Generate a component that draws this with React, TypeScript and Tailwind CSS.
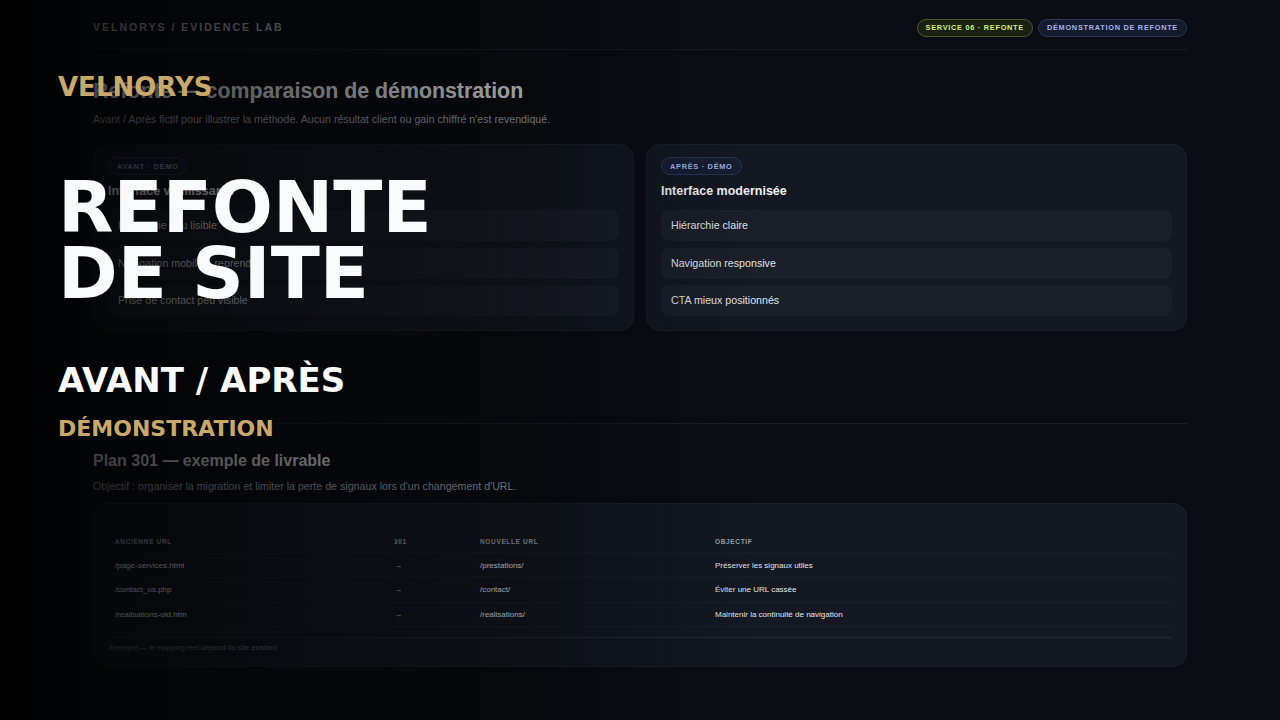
const rowsA = ["Hiérarchie peu lisible", "Navigation mobile à reprendre", "Prise de contact peu visible"];
const rowsB = ["Hiérarchie claire", "Navigation responsive", "CTA mieux positionnés"];
const table = [
  ["/page-services.html", "→", "/prestations/", "Préserver les signaux utiles"],
  ["/contact_us.php", "→", "/contact/", "Éviter une URL cassée"],
  ["/realisations-old.htm", "→", "/realisations/", "Maintenir la continuité de navigation"],
];

function Card({ badge, badgeClass, title, titleClass, rows, rowText }: { badge: string; badgeClass: string; title: string; titleClass: string; rows: string[]; rowText: string }) {
  return (
    <div className="h-[187px] flex-1 rounded-[14px] border border-[#1a202b] bg-[#131822] px-[14px] pt-[12px]">
      <div className={`h-[18px] w-fit rounded-full border border-[#2a3654] bg-[#171e33] px-[8px] text-[7.33px] font-bold leading-[17px] tracking-[0.1em] ${badgeClass}`}>{badge}</div>
      <h3 className={`mt-[7px] text-[12.5px] font-bold leading-[19px] ${titleClass}`}>{title}</h3>
      <div className="mt-[9px] flex flex-col gap-[6.5px]">
        {rows.map((r) => (
          <div key={r} className={`flex h-[31px] items-center rounded-[8px] bg-[#1a1f2a] px-[10px] pb-[1px] text-[10.67px] ${rowText}`}>{r}</div>
        ))}
      </div>
    </div>
  );
}

export default function App() {
  return (
    <div className="relative h-[720px] w-[1280px] overflow-hidden bg-[#0a0d13] font-['Liberation_Sans',sans-serif]">
      <div className="mx-auto w-[1094px]">
        <header className="flex h-[50px] items-center justify-between border-b border-[#1a1e27] pt-[5px]">
          <span className="text-[10.67px] font-bold tracking-[0.18em] text-[#9ca3af]">VELNORYS / EVIDENCE LAB</span>
          <div className="flex gap-[5px] pt-[1px]">
            <span className="h-[18px] rounded-full border border-[#4a5a2a] bg-[#1a2110] px-[8px] text-[7.33px] font-bold leading-[16px] tracking-[0.1em] text-[#d4ee70]">SERVICE 06 · REFONTE</span>
            <span className="h-[18px] rounded-full border border-[#2a3654] bg-[#151b2e] px-[8px] text-[7.33px] font-bold leading-[16px] tracking-[0.1em] text-[#a5b4ec]">DÉMONSTRATION DE REFONTE</span>
          </div>
        </header>
        <h1 className="mt-[28px] text-[21.33px] font-bold leading-[26px] text-[#e5e7eb]">Refonte — comparaison de démonstration</h1>
        <p className="mt-[8px] text-[10.67px] leading-[14px] text-[#9ca3af]">Avant / Après fictif pour illustrer la méthode. Aucun résultat client ou gain chiffré n'est revendiqué.</p>
        <div className="mt-[18px] flex gap-[12px]">
          <Card badge="AVANT · DÉMO" badgeClass="text-[#8a94ad]" title="Interface vieillissante" titleClass="text-[#e5e7eb]" rows={rowsA} rowText="text-[#d1d5db]" />
          <Card badge="APRÈS · DÉMO" badgeClass="text-[#a5b4ec]" title="Interface modernisée" titleClass="text-[#f3f4f6]" rows={rowsB} rowText="text-[#e5e7eb]" />
        </div>
        <div className="mt-[92px] border-t border-[#1a1e27]" />
        <h2 className="mt-[27px] text-[16px] font-bold leading-[20px] text-[#d1d5db]">Plan 301 — exemple de livrable</h2>
        <p className="mt-[8px] text-[10.67px] leading-[14px] text-[#9ca3af]">Objectif : organiser la migration et limiter la perte de signaux lors d'un changement d'URL.</p>
        <div className="mt-[10px] h-[164px] rounded-[14px] border border-[#1a202b] bg-[#131822] px-[15px] pt-[26px]">
          <table className="w-full table-fixed border-collapse text-left">
            <colgroup>
              <col className="w-[279px]" />
              <col className="w-[86px]" />
              <col className="w-[235px]" />
              <col />
            </colgroup>
            <thead>
              <tr className="h-[23px] border-b border-[#1b202b]">
                {["ANCIENNE URL", "301", "NOUVELLE URL", "OBJECTIF"].map((h) => (
                  <th key={h} className="px-[6px] pt-[1px] text-[6.5px] font-bold tracking-[0.1em] text-[#9ca3af]">{h}</th>
                ))}
              </tr>
            </thead>
            <tbody>
              {table.map((row) => (
                <tr key={row[0]} className="h-[24.5px] border-b border-[#1b202b]">
                  {row.map((c, i) => (
                    <td key={i} className="px-[6px] pt-[1px] text-[8px] text-[#e5e7eb]">{c}</td>
                  ))}
                </tr>
              ))}
            </tbody>
          </table>
          <div className="mt-[10px] border-t border-dotted border-[#333945] pt-[5px] text-[7.33px] leading-[10px] text-[#6b7280]">Exemple — le mapping réel dépend du site existant.</div>
        </div>
      </div>
      <div className="absolute inset-0 bg-[linear-gradient(90deg,#000_0%,rgba(0,0,0,0.72)_7%,rgba(0,0,0,0.55)_22%,rgba(0,0,0,0.3)_42%,rgba(0,0,0,0)_60%)]" />
      <div className="absolute inset-0 flex flex-col items-start pl-[58px] font-['DejaVu_Sans',sans-serif] font-bold">
        <div className="mt-[71px] text-[26px] leading-[32px] text-[#c9a96a]">VELNORYS</div>
        <div className="mt-[71px] text-[72px] leading-[66px] text-[#f8fafc]">REFONTE<br />DE SITE</div>
        <div className="mt-[53px] text-[34px] leading-[42px] text-[#f8fafc]">AVANT / APRÈS</div>
        <div className="mt-[14px] text-[22px] leading-[28px] text-[#c9a96a]">DÉMONSTRATION</div>
      </div>
    </div>
  );
}
